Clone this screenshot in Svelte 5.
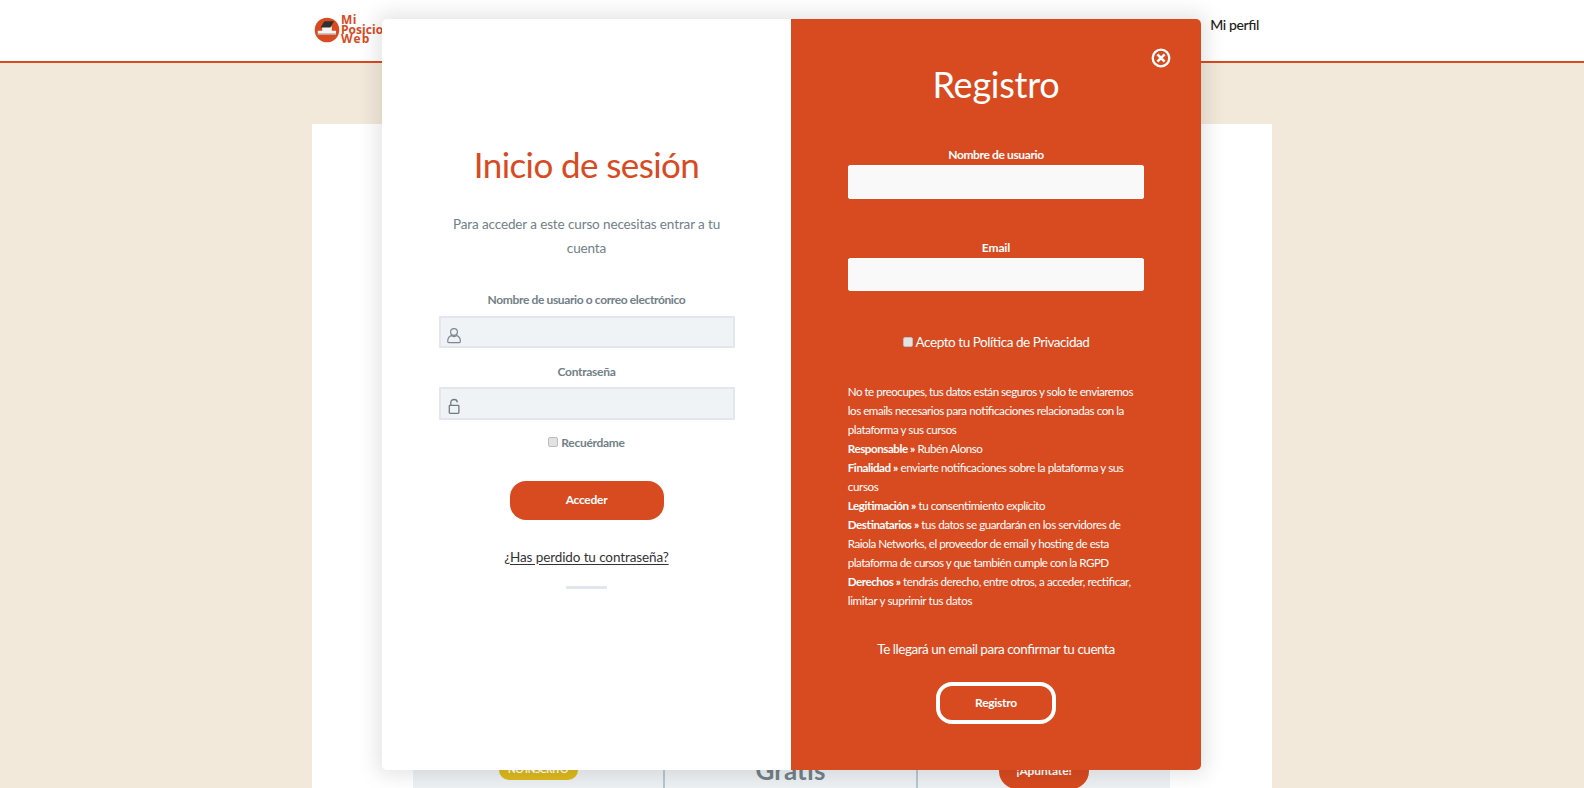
<script>
  const legal = [
    ['', 'No te preocupes, tus datos están seguros y solo te enviaremos', -0.5],
    ['', 'los emails necesarios para notificaciones relacionadas con la', -0.46],
    ['', 'plataforma y sus cursos', -0.42],
    ['Responsable »', ' Rubén Alonso', -0.44],
    ['Finalidad »', ' enviarte notificaciones sobre la plataforma y sus', -0.43],
    ['', 'cursos', -0.35],
    ['Legitimación »', ' tu consentimiento explícito', -0.44],
    ['Destinatarios »', ' tus datos se guardarán en los servidores de', -0.44],
    ['', 'Raiola Networks, el proveedor de email y hosting de esta', -0.47],
    ['', 'plataforma de cursos y que también cumple con la RGPD', -0.51],
    ['Derechos »', ' tendrás derecho, entre otros, a acceder, rectificar,', -0.45],
    ['', 'limitar y suprimir tus datos', -0.34]
  ];
</script>

<div class="page">
  <header>
    <div class="bar">
      <div class="logo">
        <svg width="26" height="26" viewBox="0 0 26 26">
          <circle cx="13" cy="13" r="12.3" fill="#d84a1f" />
          <path d="M8.200 9.500h9.600v4.300h4.200v3.700H3.800v-3.700h4.400z" fill="#f3f3f3" />
          <path d="M3.800 16.400h18.200v1.400H3.800z" fill="#b9a29c" />
          <path d="M10.5 4.200h9.500l-3.700 6.300H6.500z" fill="#303030" />
        </svg>
        <div class="brand"><span class="mi">Mi</span><span class="pos">Posicionamiento</span><span class="web">Web</span></div>
      </div>
      <a class="profile" href="#perfil">Mi perfil</a>
    </div>
  </header>

  <main>
    <div class="strip">
      <div class="cell first"><span class="badge">NO INSCRITO</span></div>
      <div class="cell mid"><span class="price">Gratis</span></div>
      <div class="cell last"><span class="join">¡Apúntate!</span></div>
    </div>
  </main>

  <div class="modal">
    <section class="login">
      <h2>Inicio de sesión</h2>
      <p class="intro">Para acceder a este curso necesitas entrar a tu<br />cuenta</p>
      <label class="lab" for="user">Nombre de usuario o correo electrónico</label>
      <div class="field">
        <svg width="16" height="18" viewBox="0 0 16 18" fill="none" stroke="#7d8792" stroke-width="1.2">
          <circle cx="7" cy="5" r="3.400" />
          <path d="M4.100 8.600C1.800 9.500.8 11.300.7 14.300c0 .9.4 1.300 1.200 1.300h10.300c.8 0 1.200-.4 1.200-1.300-.1-3-1.100-4.800-3.400-5.700-1.800 1.200-4.100 1.200-5.900 0z" />
        </svg>
        <input id="user" />
      </div>
      <label class="lab two" for="pass">Contraseña</label>
      <div class="field">
        <svg width="16" height="18" viewBox="0 0 16 18" fill="none" stroke="#6f7a85" stroke-width="1.300">
          <rect x="2.300" y="7.300" width="9.600" height="8" rx=".7" />
          <path d="M3.800 7V4.500c0-1.800 1.400-3 3.300-3 1.700 0 3.100 1.100 3.300 2.800" />
        </svg>
        <input id="pass" type="password" />
      </div>
      <div class="remember"><i class="check"></i><span>Recuérdame</span></div>
      <button class="enter">Acceder</button>
      <a class="lost" href="#perdido">¿Has perdido tu contraseña?</a>
      <div class="rule"></div>
    </section>

    <section class="register">
      <svg class="close" width="20" height="20" viewBox="0 0 20 20" fill="none" stroke="#fff">
        <circle cx="10" cy="10" r="8.300" stroke-width="2.300" />
        <path d="M6.400 6.400l7.200 7.200M13.600 6.400l-7.200 7.200" stroke-width="2.600" />
      </svg>
      <h2>Registro</h2>
      <label class="lab" for="name">Nombre de usuario</label>
      <input id="name" />
      <label class="lab mail" for="email">Email</label>
      <input id="email" />
      <div class="accept"><i class="check"></i><span>Acepto tu Política de Privacidad</span></div>
      <div class="legal">
        {#each legal as [head, text, spacing]}
          <div style="letter-spacing: {spacing}px">{#if head}<b>{head}</b>{/if}{text}</div>
        {/each}
      </div>
      <p class="confirm">Te llegará un email para confirmar tu cuenta</p>
      <button class="signup">Registro</button>
    </section>
  </div>
</div>

<style>
  :global(body) { margin: 0; overflow: hidden; }
  .page {
    position: relative;
    height: 788px;
    overflow: hidden;
    background: #f2e9db;
    font-family: Lato, sans-serif;
    font-feature-settings: "liga" 1;
    color: #728088;
  }
  .page, .page * { box-sizing: border-box; }
  header { height: 63px; background: #fff; border-bottom: 2px solid #d84a1f; }
  .bar { width: 960px; margin: 0 auto; display: flex; justify-content: space-between; }
  .logo { display: flex; padding: 17px 0 0 2px; width: 140px; gap: 1px; }
  .brand {
    display: flex; flex-direction: column; margin-top: -2px;
    font: 700 12px/9.500px "Open Sans", sans-serif; color: #d84a1f;
  }
  .mi { letter-spacing: .4px; }
  .pos { letter-spacing: .05px; }
  .web { letter-spacing: 1px; }
  .profile { margin: 16px 13px 0 0; font-size: 14px; line-height: 18px; font-weight: 500; letter-spacing: -.38px; color: #222; text-decoration: none; }
  main { width: 960px; height: 700px; margin: 61px auto 0; padding: 596px 102px 0 101px; background: #fff; }
  .strip { display: flex; height: 100px; background: #edf1f4; }
  .cell { display: flex; justify-content: center; align-items: flex-start; }
  .first { width: 250px; }
  .mid { width: 255px; border: solid #b4c8d3; border-width: 0 2px; }
  .last { width: 252px; }
  .badge { margin-top: 40px; width: 79px; height: 20px; border-radius: 10px; background: #dcb91d; color: #fff; font-weight: 700; font-size: 10px; line-height: 19px; letter-spacing: -.4px; text-align: center; }
  .price { margin-top: 34px; font-size: 26px; line-height: 32px; font-weight: 700; color: #728088; letter-spacing: .1px; }
  .join { margin-top: 32px; width: 90px; height: 37px; border-radius: 18px; background: #d84a1f; color: #fff; font-size: 12px; line-height: 38px; font-weight: 700; letter-spacing: -.1px; text-align: center; }
  .modal {
    position: absolute; left: 382px; top: 19px; width: 819px; height: 751px;
    display: flex; border-radius: 5px; overflow: hidden; background: #fff;
    box-shadow: 0 0 20px 6px rgba(0, 0, 0, .1);
  }
  section { display: flex; flex-direction: column; align-items: center; padding: 0 56px; }
  h2 { margin: 0; font-size: 36px; line-height: 44px; font-weight: 400; white-space: nowrap; }
  p { margin: 0; white-space: nowrap; text-align: center; }
  button { padding: 0; font: 700 12px Lato, sans-serif; letter-spacing: -.28px; color: #fff; background: #d84a1f; }
  .lab { font-size: 12px; line-height: 18px; font-weight: 700; letter-spacing: -.37px; white-space: nowrap; }
  .check { width: 10px; height: 10px; border: 1px solid #bdbdbd; border-radius: 2px; background: #e2e2e2; }
  .login { width: 409px; padding-top: 122.500px; }
  .login h2 { color: #d84a1f; font-size: 35px; letter-spacing: -.6px; }
  .intro { margin-top: 26.500px; font-size: 13.500px; line-height: 24px; letter-spacing: -.12px; }
  .login .lab { margin-top: 30.500px; }
  .field { width: 296px; height: 32.500px; margin-top: 7px; display: flex; align-items: center; padding: 8px 0 0 6px; background: #eff3f6; border: 2px solid #e2e7ee; border-radius: 1px; }
  .field svg { flex: none; }
  .field input { width: 200px; height: 20px; padding: 0; border: 0; background: transparent; }
  .login .two { margin-top: 15px; margin-bottom: -1px; letter-spacing: -.3px; }
  .remember { display: flex; gap: 3px; margin-top: 14px; font-size: 12px; line-height: 18px; font-weight: 700; letter-spacing: -.3px; }
  .remember .check { margin-top: 3px; }
  .enter { width: 154px; height: 39px; margin-top: 29.500px; padding-bottom: 2px; border: 0; border-radius: 16px; }
  .lost { margin-top: 26.500px; font-size: 13.500px; line-height: 20px; letter-spacing: -.11px; color: #333; text-underline-offset: 2px; white-space: nowrap; }
  .rule { width: 40.500px; height: 3px; margin-top: 19px; background: #e2e7ee; }
  .register { position: relative; width: 410px; padding-top: 42.500px; background: #d84a1f; color: #fff; }
  .register h2 { letter-spacing: -.25px; }
  .close { position: absolute; right: 30px; top: 29px; }
  .register .lab { margin-top: 40.500px; }
  .register input { width: 296.500px; height: 33.500px; margin-top: 1px; border: 1px solid #fff; border-radius: 2px; background: #f9f9f9; }
  .register .mail { margin-top: 40px; letter-spacing: -.1px; }
  .accept { display: flex; gap: 3px; margin-top: 41px; font-size: 13.500px; line-height: 20px; letter-spacing: -.45px; white-space: nowrap; }
  .accept .check { margin-top: 5px; }
  .legal { width: 296.500px; margin-top: 31px; font-size: 11.600px; line-height: 18.970px; white-space: pre; }
  .confirm { margin-top: 28px; font-size: 13.500px; line-height: 20px; letter-spacing: -.47px; }
  .signup { width: 120.500px; height: 42.500px; margin-top: 23px; border: 4px solid #fff; border-radius: 16px; }
</style>
